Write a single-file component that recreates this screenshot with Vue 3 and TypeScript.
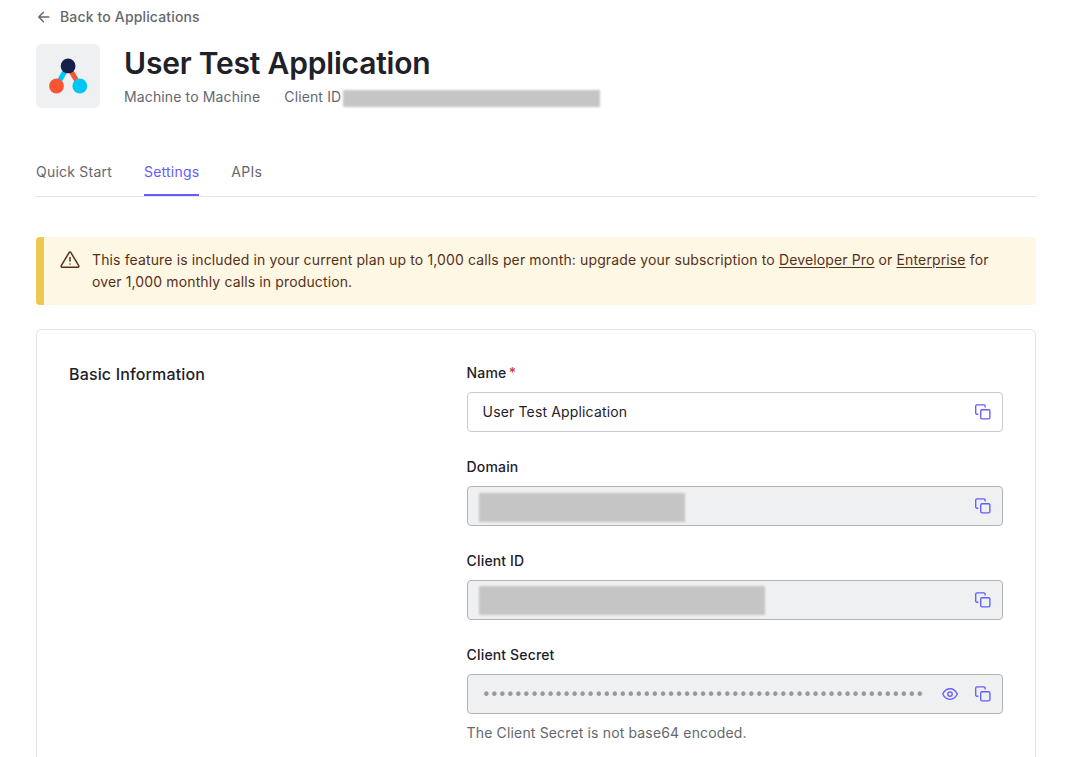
<script setup lang="ts">
interface Field {
  label: string
  kind: 'text' | 'masked' | 'secret'
  value?: string
  maskWidth?: number
  maskTop?: number
  required?: boolean
  hint?: string
}

const tabs: string[] = ['Quick Start', 'Settings', 'APIs']
const activeTab = 'Settings'

const fields: Field[] = [
  { label: 'Name', kind: 'text', value: 'User Test Application', required: true },
  { label: 'Domain', kind: 'masked', maskWidth: 206, maskTop: 3 },
  { label: 'Client ID', kind: 'masked', maskWidth: 286, maskTop: 1 },
  { label: 'Client Secret', kind: 'secret', value: '•'.repeat(55), hint: 'The Client Secret is not base64 encoded.' },
]
</script>

<template>
  <main class="page">
    <a class="back">
      <svg width="16" height="16" viewBox="0 0 16 16" fill="none" stroke="currentColor" stroke-width="1.4" stroke-linecap="round" stroke-linejoin="round">
        <path d="M12.8 8H3M7.4 3.3 2.8 8l4.6 4.7" />
      </svg>
      <span>Back to Applications</span>
    </a>

    <header class="header">
      <div class="logo">
        <svg width="64" height="64" viewBox="0 0 64 64">
          <path d="M32 22 20.5 42" stroke="#00c6f3" stroke-width="5" />
          <path d="M32 22 43.8 42" stroke="#fa5432" stroke-width="5" />
          <circle cx="32.1" cy="21.9" r="7.4" fill="#14204a" />
          <circle cx="20.5" cy="42" r="7.4" fill="#fa5432" />
          <circle cx="43.8" cy="42" r="7.4" fill="#00c6f3" />
        </svg>
      </div>
      <div>
        <h1>User Test Application</h1>
        <div class="meta">
          <span class="type">Machine to Machine</span>
          <span class="cid">Client ID</span>
          <span class="mask mask-small"></span>
        </div>
      </div>
    </header>

    <nav class="tabs">
      <a v-for="tab in tabs" :key="tab" class="tab" :class="{ active: tab === activeTab }">{{ tab }}</a>
    </nav>

    <section class="notice">
      <svg width="20" height="20" viewBox="0 0 20 20" fill="none" stroke="currentColor" stroke-width="1.5" stroke-linecap="round" stroke-linejoin="round">
        <path d="M9.1 2.6a1.05 1.05 0 0 1 1.8 0l7.8 13.1a1.1 1.1 0 0 1-.95 1.6H2.25a1.1 1.1 0 0 1-.95-1.6z" />
        <path d="M10 7.5v3.4M10 14v.1" />
      </svg>
      <p>
        This feature is included in your current plan up to 1,000 calls per month: upgrade your subscription to
        <a>Developer Pro</a> or <a>Enterprise</a> for<br />over 1,000 monthly calls in production.
      </p>
    </section>

    <section class="card">
      <h2>Basic Information</h2>
      <div class="fields">
        <div v-for="field in fields" :key="field.label" class="field">
          <label>{{ field.label }}<span v-if="field.required" class="star">*</span></label>
          <div class="control" :class="field.kind">
            <span v-if="field.kind === 'masked'" class="mask" :style="{ width: field.maskWidth + 'px', marginTop: field.maskTop + 'px' }"></span>
            <span v-else class="value">{{ field.value }}</span>
            <svg v-if="field.kind === 'secret'" class="eye" width="16" height="16" viewBox="0 0 16 16" fill="none" stroke="currentColor" stroke-width="1.35">
              <path d="M.7 8C2.4 4.5 4.9 2.7 8 2.7S13.6 4.5 15.3 8C13.6 11.5 11.1 13.3 8 13.3S2.4 11.5.7 8z" stroke-linejoin="round" />
              <circle cx="8" cy="8" r="2.2" />
            </svg>
            <svg class="copy" width="16" height="16" viewBox="0 0 16 16" fill="none" stroke="currentColor" stroke-width="1.35" stroke-linecap="round">
              <rect x="5.7" y="5.7" width="9.2" height="9.2" rx="1.3" />
              <path d="M2.9 10.2H1.9A1.2 1.2 0 0 1 .7 9V2A1.2 1.2 0 0 1 1.9.8H8.9A1.2 1.2 0 0 1 10.1 2v.9" />
            </svg>
          </div>
          <p v-if="field.hint" class="hint">{{ field.hint }}</p>
        </div>
      </div>
    </section>
  </main>
</template>

<style>
body {
  background: #fff;
  overflow: hidden;
}
</style>

<style scoped>
* {
  box-sizing: border-box;
  margin: 0;
}
.page {
  width: 1086px;
  height: 757px;
  overflow: hidden;
  padding: 6px 50px 0 36px;
  font-family: Inter, 'Liberation Sans', sans-serif;
  font-size: 14px;
  line-height: 22px;
  letter-spacing: 0.15px;
  color: #1e212a;
}
svg {
  display: block;
  flex: none;
}
.back {
  display: flex;
  align-items: center;
  gap: 8px;
  height: 22px;
  font-weight: 500;
  color: #65676e;
}
.header {
  display: flex;
  gap: 24px;
  height: 64px;
  margin-top: 16px;
}
.logo {
  width: 64px;
  height: 64px;
  border-radius: 6px;
  background: #eff0f2;
}
h1 {
  font-size: 30px;
  line-height: 38px;
  font-weight: 600;
  letter-spacing: -0.2px;
}
.meta {
  display: flex;
  align-items: center;
  margin-top: 4px;
  color: #65676e;
  letter-spacing: 0.13px;
}
.type {
  margin-right: 24px;
}
.mask {
  display: block;
  height: 29px;
  background: #c5c5c5;
  filter: blur(1px);
}
.mask-small {
  width: 257px;
  height: 17px;
  margin: 2px 0 0 2px;
}
.tabs {
  display: flex;
  gap: 32px;
  height: 44px;
  margin-top: 45px;
  border-bottom: 1px solid #e3e4e6;
  letter-spacing: 0.22px;
}
.tab {
  height: 43px;
  padding-top: 8px;
  color: #65676e;
}
.active {
  color: #635dff;
  border-bottom: 2px solid #635dff;
}
.notice {
  display: flex;
  gap: 12px;
  height: 68px;
  margin-top: 40px;
  padding: 12px 16px;
  border-left: 8px solid #eec94f;
  border-radius: 4px;
  background: #fef7e4;
  color: #573018;
  letter-spacing: 0.13px;
}
.notice svg {
  margin-top: 1px;
}
.notice p {
  white-space: nowrap;
}
.notice a {
  text-decoration: underline;
  text-underline-offset: 2px;
}
.card {
  display: flex;
  justify-content: space-between;
  height: 500px;
  margin-top: 24px;
  padding: 32px;
  border: 1px solid #e3e4e6;
  border-radius: 6px;
}
h2 {
  font-size: 16px;
  line-height: 24px;
  font-weight: 500;
}
.fields {
  display: flex;
  flex-direction: column;
  gap: 24px;
  width: 536px;
}
.field label {
  display: block;
  height: 22px;
  margin-left: -0.4px;
  font-weight: 500;
}
.star {
  margin-left: 2.4px;
  color: #d03c38;
}
.control {
  display: flex;
  align-items: center;
  height: 40px;
  margin-top: 8px;
  padding: 0 11px 0 14.6px;
  border: 1px solid #c9cace;
  border-radius: 4px;
}
.masked,
.secret {
  background: #eff0f2;
  border-color: #b2b3b7;
}
.masked {
  padding-left: 11px;
}
.copy {
  margin-left: auto;
  color: #635dff;
}
.eye {
  margin-left: auto;
  color: #635dff;
}
.eye + .copy {
  margin-left: 17px;
}
.secret .value {
  margin-left: -0.9px;
  padding-top: 1px;
  font-family: 'DejaVu Sans Mono', monospace;
  font-size: 15px;
  letter-spacing: -1px;
  color: #97999f;
}
.hint {
  margin-top: 8px;
  margin-left: -0.4px;
  color: #65676e;
}
</style>
